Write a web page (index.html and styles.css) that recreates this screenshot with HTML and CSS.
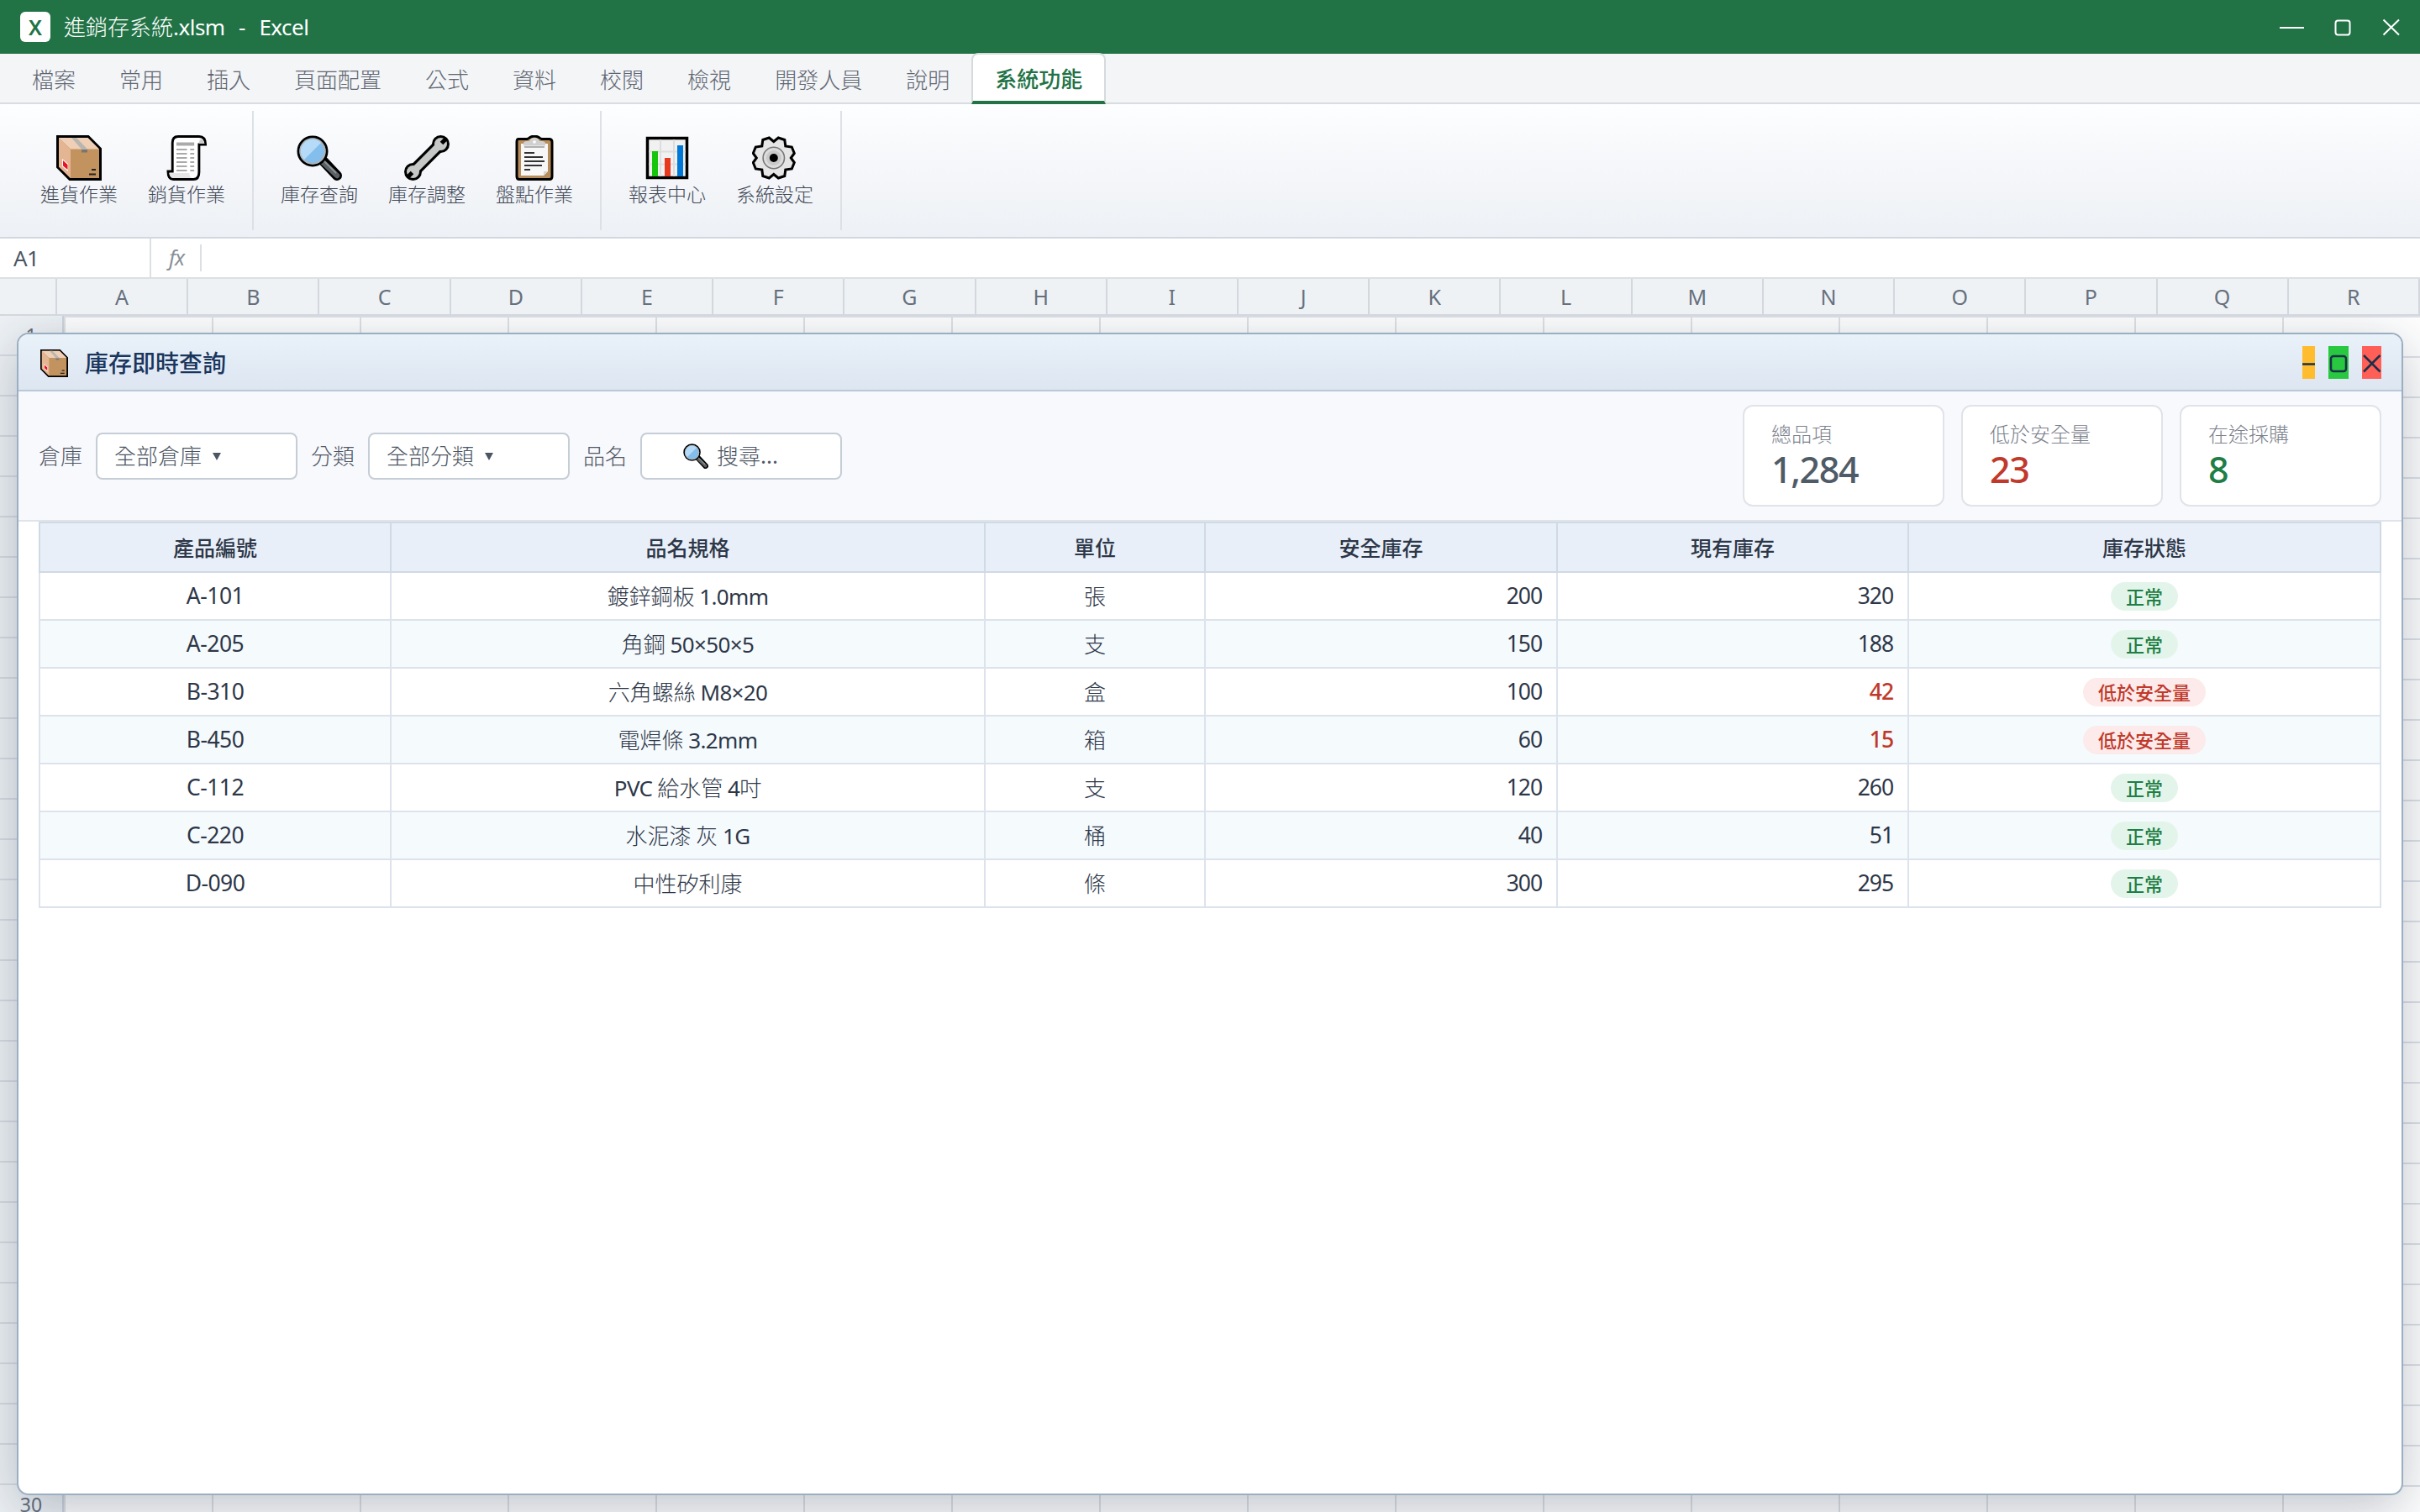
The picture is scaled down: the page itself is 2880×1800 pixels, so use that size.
FILE: index.html
```
<!DOCTYPE html>
<html lang="zh-Hant">
<head>
  <meta charset="UTF-8" />
  <title>進銷存系統.xlsm - Excel</title>
  <link rel="stylesheet" href="styles.css">
</head>
<body>
  <!-- icons shared by the ribbon and the window -->
  <svg class="sprite" width="0" height="0">
    <symbol id="i-box" viewBox="0 0 54 54">
      <path d="M1.5 1.5H38L52.5 16V52.5H16L1.5 38Z" fill="#c2935e" stroke="#000" stroke-width="3"/>
      <path d="M3 3L17 17V51L3 37.5Z" fill="#e3b592"/>
      <path d="M3 3H37.5L51 16.5H17Z" fill="#efcfb5"/>
      <path d="M18 3H24L37 16.5V20H30V16.5Z" fill="#b9b5b0"/>
      <path d="M30 17h7v3.500h-7z" fill="#7b756d"/>
      <path d="M7 28L14 34V43L7 37Z" fill="#fff"/>
      <path d="M8 30L13.500 35V41L8 36.500Z" fill="#e81224"/>
      <path d="M42 41h5M39 46.500h8" stroke="#222" stroke-width="2"/>
    </symbol>
    <symbol id="i-receipt" viewBox="0 0 54 54">
      <g transform="translate(3.5 0) scale(.96 1)">
        <path d="M14 1.500H40Q48 1.500 48 11H40V44Q40 52.500 33 52.500H8Q1.500 52.500 1.500 43H7V9Q7 1.500 14 1.500Z" fill="#fff" stroke="#000" stroke-width="3"/>
        <path d="M40 10Q40 4 44 5L47 10Z" fill="#ccc"/>
        <path d="M3 45H28Q28 50 31 51H8Q4 50 3 45Z" fill="#e6e6e6"/>
        <path d="M12 10.500H34" stroke="#aaa" stroke-width="4"/>
        <path d="M12 17H25M29 17H34M12 22H25M29 22H34M12 27H25M29 27H34M12 32H25M29 32H34M12 37H25M29 37H34M12 42H25M29 42H34" stroke="#aaa" stroke-width="1.800"/>
      </g>
    </symbol>
    <symbol id="i-search" viewBox="0 0 54 54">
      <path d="M32 31L48 48" stroke="#000" stroke-width="12" stroke-linecap="round"/>
      <path d="M30 31L48 48" stroke="#5a6063" stroke-width="6.500" stroke-linecap="round"/>
      <path d="M31 29L47 45" stroke="#8d9497" stroke-width="2"/>
      <circle cx="19" cy="19" r="17" fill="#83beec" stroke="#000" stroke-width="3"/>
      <circle cx="19" cy="19" r="14.700" fill="none" stroke="#aeb4b8" stroke-width="2"/>
      <path d="M9 29A14 14 0 0 1 29 9Z" fill="#b5dbf8"/>
    </symbol>
    <symbol id="i-wrench" viewBox="0 0 54 54">
      <g stroke="#000" fill="#000">
        <path d="M43 11L11 43" stroke-width="15"/>
        <circle cx="43.500" cy="10.500" r="10.500" stroke="none"/>
        <circle cx="10.500" cy="43.500" r="10.500" stroke="none"/>
      </g>
      <g stroke="#c6c8c7" fill="#c6c8c7">
        <path d="M43 11L11 43" stroke-width="8.500"/>
        <circle cx="43.500" cy="10.500" r="7.500" stroke="none"/>
        <circle cx="10.500" cy="43.500" r="7.500" stroke="none"/>
      </g>
      <path d="M44.500 9.500L50 4M9.500 44.500L4 50" stroke="#000" stroke-width="5"/>
    </symbol>
    <symbol id="i-clipboard" viewBox="0 0 54 54">
      <path d="M8 4.500H18Q20 4 21 3Q27 -1 33 3Q34 4 36 4.500H45Q48 5 48 8V49Q48 52.500 45 52.500H9Q6 52.500 6 49V8Q6 4.500 8 4.500Z" fill="#b88d5c" stroke="#000" stroke-width="3"/>
      <path d="M11 10H43V43L38 48H11Z" fill="#f7f7f7"/>
      <path d="M38 48V43H43Z" fill="#d5d5d5"/>
      <path d="M14 12.500V10Q14 7 18 7H21Q22 3 27 3T33 7H36Q40 7 40 10V12.500Z" fill="#d0d0d0"/>
      <path d="M15 14H39" stroke="#999" stroke-width="1.500"/>
      <circle cx="27" cy="8" r="1.800" fill="#fff"/>
      <path d="M15 21H27M15 26H37M15 31H39M15 36H36M15 41H22" stroke="#333" stroke-width="1.800"/>
    </symbol>
    <symbol id="i-chart" viewBox="0 0 54 54">
      <path d="M3.500 3.500H50.500V50.500H3.500Z" fill="#f1f1f1" stroke="#000" stroke-width="3.500"/>
      <path d="M19 5V49M35 5V49M5 19.500H49M5 34.500H49" stroke="#ddd" stroke-width="2"/>
      <path d="M9 19h7v30H9z" fill="#16c60c"/>
      <path d="M24 27h7v22h-7z" fill="#e8391f"/>
      <path d="M39 12h7v37h-7z" fill="#0078d7"/>
    </symbol>
    <symbol id="i-gear" viewBox="0 0 54 54">
      <path transform="translate(-1.2 0)" d="M21.500 3L27 7.500L32.500 3L40 5.500L41 13L48.500 14L51.500 21.500L47.500 27L51.500 32.500L48.500 40L41 41L40 48.500L32.500 51L27 46.500L21.500 51L14 48.500L13 41L5.500 40L2.500 32.500L6.500 27L2.500 21.500L5.500 14L13 13L14 5.500Z" fill="#e6e6e6" stroke="#000" stroke-width="3"/>
      <circle cx="25.800" cy="27" r="12.700" fill="#dcdcdc" stroke="#777" stroke-width="1.600"/>
      <circle cx="25.800" cy="27" r="9" fill="#c9c9c9"/>
      <circle cx="25.800" cy="27" r="5" fill="#000"/>
    </symbol>
  </svg>

  <div class="title-bar">
    <div class="app-icon">X</div>
    <div class="file-name">進銷存系統<span class="latin">.xlsm&nbsp; -&nbsp; Excel</span></div>
    <svg class="app-controls" width="144" height="24" viewBox="0 0 144 24">
      <path d="M1 13H30" /><rect x="67.500" y="4.500" width="17" height="17" rx="3"/><path d="M124.500 3.500L143 21.500M143 3.500L124.500 21.500"/>
    </svg>
  </div>

  <div class="tabs">
    <div class="tab">檔案</div>
    <div class="tab">常用</div>
    <div class="tab">插入</div>
    <div class="tab">頁面配置</div>
    <div class="tab">公式</div>
    <div class="tab">資料</div>
    <div class="tab">校閱</div>
    <div class="tab">檢視</div>
    <div class="tab">開發人員</div>
    <div class="tab">說明</div>
    <div class="tab active">系統功能</div>
  </div>

  <div class="ribbon">
    <div class="group">
      <div class="tool"><svg><use href="#i-box"/></svg><span>進貨作業</span></div>
      <div class="tool"><svg><use href="#i-receipt"/></svg><span>銷貨作業</span></div>
    </div>
    <div class="group">
      <div class="tool"><svg><use href="#i-search"/></svg><span>庫存查詢</span></div>
      <div class="tool"><svg><use href="#i-wrench"/></svg><span>庫存調整</span></div>
      <div class="tool"><svg><use href="#i-clipboard"/></svg><span>盤點作業</span></div>
    </div>
    <div class="group">
      <div class="tool"><svg><use href="#i-chart"/></svg><span>報表中心</span></div>
      <div class="tool"><svg><use href="#i-gear"/></svg><span>系統設定</span></div>
    </div>
  </div>

  <div class="formula-bar">
    <div class="cell-name">A1</div>
    <div class="fx">fx</div>
  </div>

  <div class="col-heads">
    <div class="corner"></div>
    <div>A</div><div>B</div><div>C</div><div>D</div><div>E</div><div>F</div>
    <div>G</div><div>H</div><div>I</div><div>J</div><div>K</div><div>L</div>
    <div>M</div><div>N</div><div>O</div><div>P</div><div>Q</div><div>R</div>
  </div>

  <div class="sheet">
    <div class="row-heads" id="rowHeads"></div>
    <div class="cells"></div>

    <div class="window">
      <div class="window-title">
        <svg class="window-icon"><use href="#i-box"/></svg>
        <h1>庫存即時查詢</h1>
        <div class="window-controls">
          <svg class="min" width="15" height="39"><path d="M0 21.500H15"/></svg>
          <svg class="max" width="24" height="39"><rect x="3" y="12" width="18" height="18" rx="3"/></svg>
          <svg class="close" width="23" height="39"><path d="M2 11L21.500 30.500M21.500 11L2 30.500"/></svg>
        </div>
      </div>

      <div class="filters">
        <label>倉庫</label>
        <div class="field">全部倉庫 <i class="arrow"></i></div>
        <label>分類</label>
        <div class="field">全部分類 <i class="arrow"></i></div>
        <label>品名</label>
        <div class="field search"><svg><use href="#i-search"/></svg>搜尋<span class="latin">...</span></div>
        <div class="cards">
          <div class="card"><span>總品項</span><b>1,284</b></div>
          <div class="card low"><span>低於安全量</span><b>23</b></div>
          <div class="card transit"><span>在途採購</span><b>8</b></div>
        </div>
      </div>

      <table>
        <colgroup>
          <col class="c-id"><col class="c-name"><col class="c-unit"><col class="c-safe"><col class="c-stock"><col class="c-state">
        </colgroup>
        <thead>
          <tr><th>產品編號</th><th>品名規格</th><th>單位</th><th>安全庫存</th><th>現有庫存</th><th>庫存狀態</th></tr>
        </thead>
        <tbody>
          <tr><td class="latin">A-101</td><td>鍍鋅鋼板 <span class="latin">1.0mm</span></td><td>張</td><td class="num">200</td><td class="num">320</td><td><span class="pill">正常</span></td></tr>
          <tr><td class="latin">A-205</td><td>角鋼 <span class="latin">50×50×5</span></td><td>支</td><td class="num">150</td><td class="num">188</td><td><span class="pill">正常</span></td></tr>
          <tr><td class="latin">B-310</td><td>六角螺絲 <span class="latin">M8×20</span></td><td>盒</td><td class="num">100</td><td class="num warn">42</td><td><span class="pill bad">低於安全量</span></td></tr>
          <tr><td class="latin">B-450</td><td>電焊條 <span class="latin">3.2mm</span></td><td>箱</td><td class="num">60</td><td class="num warn">15</td><td><span class="pill bad">低於安全量</span></td></tr>
          <tr><td class="latin">C-112</td><td><span class="latin">PVC</span> 給水管 <span class="latin">4</span>吋</td><td>支</td><td class="num">120</td><td class="num">260</td><td><span class="pill">正常</span></td></tr>
          <tr><td class="latin">C-220</td><td>水泥漆 灰 <span class="latin">1G</span></td><td>桶</td><td class="num">40</td><td class="num">51</td><td><span class="pill">正常</span></td></tr>
          <tr><td class="latin">D-090</td><td>中性矽利康</td><td>條</td><td class="num">300</td><td class="num">295</td><td><span class="pill">正常</span></td></tr>
        </tbody>
      </table>
    </div>
  </div>

<script>
  const heads = document.getElementById("rowHeads");
  for (let i = 1; i <= 30; i++) {
    const row = document.createElement("div");
    row.textContent = i;
    heads.appendChild(row);
  }
</script>
</body>
</html>
```
FILE: styles.css
```
:root {
  --green: #217346;
  --text: #2d3748;
  --latin: "Noto Sans", "Open Sans", sans-serif;
}

* {
  box-sizing: border-box;
}

body {
  margin: 0;
  width: 2880px;
  height: 1800px;
  overflow: hidden;
  display: flex;
  flex-direction: column;
  font-family: "Noto Sans CJK TC", sans-serif;
  font-weight: 300;
  font-size: 26px;
  line-height: 1.33;
  color: #4b5563;
  background: #fff;
}

.sprite {
  position: absolute;
}

.latin {
  font-family: var(--latin);
  font-weight: 400;
  letter-spacing: -0.03em;
}

/* title bar */
.title-bar {
  height: 64px;
  flex: none;
  display: flex;
  align-items: center;
  gap: 16px;
  padding: 0 24px;
  background: var(--green);
  color: #fff;
}

.app-icon {
  width: 36px;
  height: 36px;
  border-radius: 6px;
  background: #fff;
  color: var(--green);
  font: 600 25px/36px var(--latin);
  text-align: center;
}

.file-name .latin {
  letter-spacing: -0.02em;
  word-spacing: 2px;
}

.app-controls {
  margin-left: auto;
  fill: none;
  stroke: #fff;
  stroke-width: 2;
}

/* tabs */
.tabs {
  height: 60px;
  flex: none;
  display: flex;
  padding-left: 12px;
  background: #f3f5f7;
  border-bottom: 2px solid #d9dce0;
}

.tab {
  padding: 0 26px;
  line-height: 60px;
  color: #5f6672;
}

.tab.active {
  width: 160px;
  height: 61px;
  margin-top: -1px;
  padding: 0 0 0 26px;
  line-height: 55px;
  border: 2px solid #d5dbdd;
  border-bottom: 4px solid var(--green);
  border-radius: 8px 8px 0 0;
  background: #fff;
  color: var(--green);
  font-weight: 500;
  white-space: nowrap;
}

/* ribbon */
.ribbon {
  height: 160px;
  flex: none;
  display: flex;
  padding: 8px 16px;
  background: linear-gradient(#fcfeff, #f6f7fa 45%, #edf1f5);
  border-bottom: 2px solid #d3d8e0;
}

.group {
  display: flex;
  gap: 4px;
  padding: 0 16px;
  border-right: 2px solid #dde1e6;
}

.tool {
  width: 124px;
  padding-top: 29px;
  display: flex;
  flex-direction: column;
  align-items: center;
  font-size: 23px;
  color: #3f4856;
}

.tool svg {
  width: 54px;
  height: 54px;
}

/* formula bar */
.formula-bar {
  height: 48px;
  flex: none;
  display: flex;
  align-items: center;
  border-bottom: 2px solid #dcdfe3;
  font-family: var(--latin);
  font-weight: 400;
}

.cell-name {
  width: 180px;
  height: 46px;
  line-height: 47px;
  padding-left: 16px;
  border-right: 2px solid #dcdfe3;
  letter-spacing: -0.02em;
}

.fx {
  width: 60px;
  height: 32px;
  line-height: 31px;
  padding-left: 2px;
  text-align: center;
  font-size: 25px;
  font-style: italic;
  color: #8a9099;
  border-right: 2px solid #dcdfe3;
  letter-spacing: -0.04em;
}

/* column letters */
.col-heads {
  height: 44px;
  flex: none;
  display: flex;
  background: #eef2f5;
  border-bottom: 2px solid #d3d8de;
  font-family: var(--latin);
  font-weight: 400;
  font-size: 25px;
  color: #66707d;
}

.col-heads div {
  flex: 1;
  line-height: 43px;
  text-align: center;
  border-right: 2px solid #d3d8de;
}

.col-heads .corner {
  flex: none;
  width: 68px;
}

/* sheet behind the window */
.sheet {
  position: relative;
  flex: 1;
  min-height: 0;
  display: flex;
  overflow: hidden;
}

.row-heads {
  width: 76px;
  flex: none;
  background: #eef2f5;
  border-right: 2px solid #cdd5dd;
  font-family: var(--latin);
  font-weight: 400;
  font-size: 23px;
  color: #66707d;
}

.row-heads div {
  height: 48px;
  line-height: 46px;
  text-align: center;
  border-bottom: 2px solid #d8dce3;
}

.cells {
  flex: 1;
  background:
    repeating-linear-gradient(90deg, #dfe2e6 0 2px, transparent 2px 176px),
    repeating-linear-gradient(#dfe2e8 0 2px, transparent 2px 48px);
}

/* floating window */
.window {
  position: absolute;
  inset: 20px;
  border: 2px solid #9aafc2;
  border-radius: 14px;
  background: #fff;
  overflow: hidden;
  box-shadow: 0 16px 64px rgba(20, 35, 60, 0.28);
}

.window-title {
  height: 68px;
  display: flex;
  align-items: center;
  padding: 2px 24px 0 26px;
  background: linear-gradient(#e9f1f9, #dde6f1);
  border-bottom: 2px solid #b8c9da;
}

.window-icon {
  width: 33px;
  height: 33px;
  margin-right: 20px;
}

.window-title h1 {
  margin: 0;
  font-size: 28px;
  font-weight: 500;
  color: #1a365d;
}

.window-controls {
  margin: -2px 0 0 auto;
  display: flex;
  gap: 16px;
  fill: none;
  stroke: #1b3048;
  stroke-width: 2.500;
}

.min {
  background: #febc2e;
}

.max {
  background: #28c840;
}

.close {
  background: #ff5f57;
}

/* filters and summary */
.filters {
  height: 155px;
  display: flex;
  align-items: center;
  gap: 16px;
  padding: 0 24px;
  background: #f8f9fd;
  border-bottom: 2px solid #e0e4ea;
}

.filters label {
  color: #4f5763;
}

.field {
  width: 240px;
  height: 56px;
  display: flex;
  align-items: center;
  padding-left: 20px;
  border: 2px solid #c5cdd6;
  border-radius: 8px;
  background: #fff;
}

.arrow {
  margin: 2px 0 0 13px;
  border: 5px solid transparent;
  border-top: 9px solid #4b5563;
  border-bottom: 0;
}

.field.search {
  padding-left: 49px;
}

.search svg {
  width: 30px;
  height: 30px;
  margin-right: 10px;
}

.search .latin {
  letter-spacing: 0;
}

.cards {
  margin-left: auto;
  display: flex;
  gap: 20px;
}

.card {
  width: 240px;
  height: 121px;
  display: flex;
  flex-direction: column;
  padding: 16px 32px;
  border: 2px solid #e0e3e9;
  border-radius: 12px;
  background: #fff;
}

.card span {
  font-size: 24px;
  line-height: 32px;
  color: #7b818c;
}

.card b {
  font: 500 43px/54px var(--latin);
  letter-spacing: -0.032em;
}

.card:first-child b {
  color: #4f5b66;
}

.low b {
  color: #c0392b;
}

.transit b {
  color: #1e7e45;
}

/* stock table */
table {
  width: 2788px;
  margin: 0 24px;
  table-layout: fixed;
  border-collapse: collapse;
  color: var(--text);
}

.c-id { width: 418px; }
.c-name { width: 707px; }
.c-unit { width: 262px; }
.c-safe { width: 419px; }
.c-stock { width: 418px; }
.c-state { width: 562px; }

th {
  height: 59px;
  padding: 0;
  font-size: 25px;
  font-weight: 500;
  background: #e8eff8;
  border: 2px solid #d0dae4;
}

td {
  height: 57px;
  padding: 0 16px;
  text-align: center;
  border: 2px solid #dde3ec;
}

td.latin {
  font-size: 26.5px;
  letter-spacing: -0.02em;
}

td span.latin {
  letter-spacing: -0.025em;
}

tbody tr:nth-child(even) {
  background: #f5fafd;
}

.num {
  padding-right: 17px;
  text-align: right;
  font-family: var(--latin);
  font-weight: 400;
  font-size: 26.5px;
  letter-spacing: -0.04em;
}

.warn {
  color: #c0392b;
  font-weight: 500;
}

.pill {
  display: block;
  width: max-content;
  height: 34px;
  margin: 0 auto;
  line-height: 33px;
  padding: 0 18px;
  border-radius: 17px;
  background: #e3f5ea;
  color: #1e7e45;
  font-size: 22px;
  font-weight: 500;
}

.pill.bad {
  background: #fdeaea;
  color: #c0392b;
}
```
